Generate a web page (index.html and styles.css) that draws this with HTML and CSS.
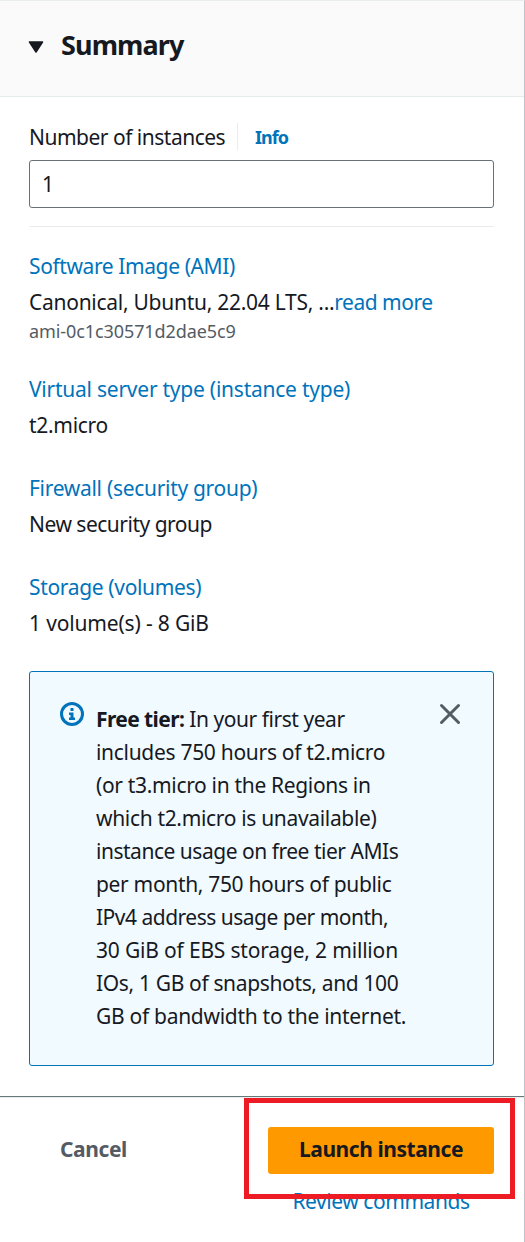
FILE: index.html
```html
<!DOCTYPE html>
<html lang="en">
<head>
<meta charset="utf-8">
<title>Summary</title>
<link rel="stylesheet" href="styles.css">
</head>
<body>
<main class="panel">
  <header class="panel-header">
    <svg class="caret" width="16" height="12" viewBox="0 0 16 12"><path d="M1.5 1h13L8 11z" fill="#16191f" stroke="#16191f" stroke-width="1.5" stroke-linejoin="round"/></svg>
    <h1 class="title"><span class="t-summary">Summary</span></h1>
  </header>
  <section class="content">
    <div class="label-row">
      <label class="label" for="count"><span class="t-number">Number of instances</span></label>
      <a class="info"><span class="t-info">Info</span></a>
    </div>
    <input class="input" id="count" value="1">
    <div class="item item-first">
      <a class="link"><span class="t-ami">Software Image (AMI)</span></a>
      <div class="value"><span class="t-canonical">Canonical, Ubuntu, 22.04 LTS, ...</span><a class="link-inline"><span class="t-read">read more</span></a></div>
      <div class="detail"><span class="t-id">ami-0c1c30571d2dae5c9</span></div>
    </div>
    <div class="item">
      <a class="link"><span class="t-virtual">Virtual server type (instance type)</span></a>
      <div class="value"><span class="t-micro">t2.micro</span></div>
    </div>
    <div class="item">
      <a class="link"><span class="t-firewall">Firewall (security group)</span></a>
      <div class="value"><span class="t-new">New security group</span></div>
    </div>
    <div class="item">
      <a class="link"><span class="t-storage">Storage (volumes)</span></a>
      <div class="value"><span class="t-volume">1 volume(s) - 8 GiB</span></div>
    </div>
    <div class="alert">
      <svg class="alert-icon" width="24" height="24" viewBox="0 0 24 24"><circle cx="12" cy="12" r="10.5" fill="none" stroke="#0073bb" stroke-width="3"/><path d="M10.5 6h3v3h-3zM9 10.5h4.5v5H15v2.5H9v-2.5h1.5V13H9z" fill="#0073bb"/></svg>
      <p class="alert-text">
        <span class="line l1"><b class="l1b">Free tier:</b> In your first year</span>
        <span class="line l2">includes 750 hours of t2.micro</span>
        <span class="line l3">(or t3.micro in the Regions in</span>
        <span class="line l4">which t2.micro is unavailable)</span>
        <span class="line l5">instance usage on free tier AMIs</span>
        <span class="line l6">per month, 750 hours of public</span>
        <span class="line l7">IPv4 address usage per month,</span>
        <span class="line l8">30 GiB of EBS storage, 2 million</span>
        <span class="line l9">IOs, 1 GB of snapshots, and 100</span>
        <span class="line l10">GB of bandwidth to the internet.</span>
      </p>
      <svg class="close" width="24" height="24" viewBox="0 0 24 24"><path d="M3.5 3.5l17 17M20.5 3.5l-17 17" stroke="#545b64" stroke-width="3" stroke-linecap="round"/></svg>
    </div>
  </section>
  <footer class="footer">
    <button class="cancel"><span class="t-cancel">Cancel</span></button>
    <div class="actions">
      <button class="launch"><span class="t-launch">Launch instance</span></button>
      <a class="review"><span class="t-review">Review commands</span></a>
    </div>
    <div class="highlight"></div>
  </footer>
</main>
</body>
</html>
```
FILE: styles.css
```css
* { box-sizing: border-box; }
body { margin: 0; background: #fff; color: #16191f; font: 21px/33px "Noto Sans", sans-serif; letter-spacing: -0.4px; }
.panel { width: 525px; height: 1242px; border-top: 1px solid #eaeded; border-right: 1px solid #bfc3c6; overflow: hidden; }
.panel-header { display: flex; align-items: center; height: 96px; padding: 0 0 8px 28px; background: #fafafa; border-bottom: 1px solid #e5eaea; }
.caret { margin-top: 4px; }
.title { margin: 0 0 0 17px; font-size: 27px; line-height: 36px; font-weight: 700; }
.content { padding: 23px 30px 0 29px; }
.label-row { display: flex; align-items: center; height: 33px; }
.label { width: 209px; border-right: 1px solid #eaeded; height: 27px; line-height: 29px; white-space: nowrap; }
.info { margin-left: 17px; padding-top: 2px; font-size: 18px; font-weight: 700; color: #0073bb; }
.input { display: block; width: 465px; height: 48px; margin-top: 7px; padding: 0 12px; border: 1px solid #687078; border-radius: 3px; background: #fff; color: #16191f; font: inherit; }
.item { margin-top: 30px; white-space: nowrap; }
.item-first { margin-top: 18px; padding-top: 23px; border-top: 1px solid #eaeded; }
.link { display: block; color: #0073bb; }
.link-inline { color: #0073bb; }
.value { margin-top: 3px; }
.detail { height: 24px; line-height: 24px; font-size: 18px; color: #545b64; }
.alert { display: flex; align-items: flex-start; width: 465px; height: 395px; margin-top: 31px; padding: 30px; border: 1px solid #0073bb; border-radius: 3px; background: #f1faff; }
.alert-icon { flex: none; }
.alert-text { flex: 1; margin: 1px 0 0 12px; white-space: nowrap; }
.line { display: block; }
.close { flex: none; margin-right: 1px; }
.footer { position: relative; display: flex; justify-content: space-between; height: 146px; margin-top: 30px; padding: 30px 30px 0 60px; border-top: 1px solid #687878; box-shadow: inset 0 1px 0 #eaeded; }
.cancel, .launch { height: 47px; padding: 0 0 3px; border: 0; font: inherit; font-weight: 700; line-height: 44px; white-space: nowrap; }
.cancel { background: none; color: #545b64; }
.actions { display: flex; flex-direction: column; align-items: center; width: 226px; }
.launch { width: 226px; border-radius: 3px; background: #ff9900; color: #16191f; }
.review { margin-top: 11px; color: #0073bb; white-space: nowrap; }
.highlight { position: absolute; left: 244px; top: 1px; width: 271px; height: 101px; border: 5px solid #ed1c24; }

/* Text tracking */
.t-summary { letter-spacing: -0.9px; }
.t-number { letter-spacing: -0.5px; }
.t-info { letter-spacing: -1px; }
.t-canonical { letter-spacing: -0.27px; }
.t-read { letter-spacing: -0.5px; }
.t-id { letter-spacing: -0.09px; }
.t-virtual { letter-spacing: -0.24px; }
.t-micro { letter-spacing: -0.3px; }
.t-firewall { letter-spacing: -0.3px; }
.t-new { letter-spacing: -0.5px; }
.t-storage { letter-spacing: -0.34px; }
.t-volume { letter-spacing: -0.16px; }
.t-cancel { letter-spacing: -0.4px; }
.t-launch { letter-spacing: -0.45px; }
.t-review { letter-spacing: -0.45px; }
.l1 { letter-spacing: -0.45px; }
.l1b { letter-spacing: -0.6px; }
.l2 { letter-spacing: -0.3px; }
.l3, .l4, .l6 { letter-spacing: -0.33px; }
.l5 { letter-spacing: -0.48px; }
.l7 { letter-spacing: -0.5px; }
.l8 { letter-spacing: -0.18px; }
.l9 { letter-spacing: -0.35px; }
.l10 { letter-spacing: -0.29px; }
```
